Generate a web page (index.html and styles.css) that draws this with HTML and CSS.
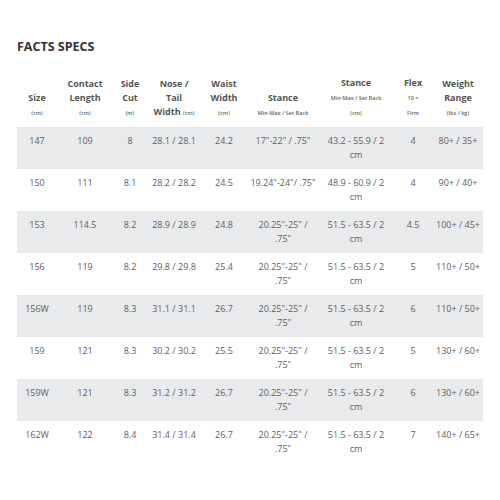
FILE: index.html
```html
<!DOCTYPE html>
<html>
<head>
<meta charset="utf-8">
<link rel="stylesheet" href="styles.css">
</head>
<body>
<div class="page">
  <h1 class="title">FACTS SPECS</h1>
  <table class="specs">
    <colgroup>
      <col class="c-size"><col class="c-contact"><col class="c-side"><col class="c-nose"><col class="c-waist"><col class="c-stance"><col class="c-stance2"><col class="c-flex"><col class="c-weight">
    </colgroup>
    <thead>
      <tr>
        <th>Size<br><span class="unit">(cm)</span></th>
        <th>Contact<br>Length<br><span class="unit">(cm)</span></th>
        <th>Side<br>Cut<br><span class="unit">(m)</span></th>
        <th>Nose /<br>Tail<br>Width <span class="unit">(cm)</span></th>
        <th>Waist<br>Width<br><span class="unit">(cm)</span></th>
        <th>Stance<br><span class="unit">Min-Max / Set Back</span></th>
        <th>Stance<br><span class="unit">Min-Max / Set Back</span><br><span class="unit">(cm)</span></th>
        <th>Flex<br><span class="unit">10 =</span><br><span class="unit">Firm</span></th>
        <th>Weight<br>Range<br><span class="unit">(lbs / kg)</span></th>
      </tr>
    </thead>
    <tbody>
      <tr class="alt"><td>147</td><td>109</td><td>8</td><td>28.1 / 28.1</td><td>24.2</td><td>17"-22" / .75"</td><td>43.2 - 55.9 / 2<br>cm</td><td>4</td><td>80+ / 35+</td></tr>
      <tr><td>150</td><td>111</td><td>8.1</td><td>28.2 / 28.2</td><td>24.5</td><td>19.24"-24"/ .75"</td><td>48.9 - 60.9 / 2<br>cm</td><td>4</td><td>90+ / 40+</td></tr>
      <tr class="alt"><td>153</td><td>114.5</td><td>8.2</td><td>28.9 / 28.9</td><td>24.8</td><td>20.25"-25" /<br>.75"</td><td>51.5 - 63.5 / 2<br>cm</td><td>4.5</td><td>100+ / 45+</td></tr>
      <tr><td>156</td><td>119</td><td>8.2</td><td>29.8 / 29.8</td><td>25.4</td><td>20.25"-25" /<br>.75"</td><td>51.5 - 63.5 / 2<br>cm</td><td>5</td><td>110+ / 50+</td></tr>
      <tr class="alt"><td>156W</td><td>119</td><td>8.3</td><td>31.1 / 31.1</td><td>26.7</td><td>20.25"-25" /<br>.75"</td><td>51.5 - 63.5 / 2<br>cm</td><td>6</td><td>110+ / 50+</td></tr>
      <tr><td>159</td><td>121</td><td>8.3</td><td>30.2 / 30.2</td><td>25.5</td><td>20.25"-25" /<br>.75"</td><td>51.5 - 63.5 / 2<br>cm</td><td>5</td><td>130+ / 60+</td></tr>
      <tr class="alt"><td>159W</td><td>121</td><td>8.3</td><td>31.2 / 31.2</td><td>26.7</td><td>20.25"-25" /<br>.75"</td><td>51.5 - 63.5 / 2<br>cm</td><td>6</td><td>130+ / 60+</td></tr>
      <tr><td>162W</td><td>122</td><td>8.4</td><td>31.4 / 31.4</td><td>26.7</td><td>20.25"-25" /<br>.75"</td><td>51.5 - 63.5 / 2<br>cm</td><td>7</td><td>140+ / 65+</td></tr>
    </tbody>
  </table>
</div>
</body>
</html>
```
FILE: styles.css
```css
html, body {
  margin: 0;
  padding: 0;
  background: #ffffff;
}
body {
  font-family: "Open Sans", "Noto Sans", sans-serif;
  color: #5a5a5a;
}
.page {
  padding: 38px 17px 0 17px;
}
.title {
  margin: 0 0 20px 0;
  font-size: 12.5px;
  line-height: 18px;
  font-weight: 700;
  color: #333;
  letter-spacing: 0;
}
.specs {
  border-collapse: collapse;
  table-layout: fixed;
  width: 466px;
}
.c-size { width: 40px; }
.c-contact { width: 56px; }
.c-side { width: 34px; }
.c-nose { width: 54px; }
.c-waist { width: 46px; }
.c-stance { width: 72px; }
.c-stance2 { width: 74px; }
.c-flex { width: 40px; }
.c-weight { width: 50px; }
.specs th {
  font-size: 9px;
  line-height: 14px;
  font-weight: 700;
  color: #555;
  text-align: center;
  vertical-align: bottom;
  padding: 0 0 7px 0;
  white-space: nowrap;
}
.unit {
  font-size: 5.5px;
  font-weight: 600;
  color: #666;
}
.specs td {
  font-size: 9px;
  line-height: 14px;
  color: #5e5e5e;
  text-align: center;
  vertical-align: top;
  padding: 7px 0 7px 0;
  height: 28px;
  white-space: nowrap;
}
.specs tr.alt td {
  background: #e9eaec;
}
```
